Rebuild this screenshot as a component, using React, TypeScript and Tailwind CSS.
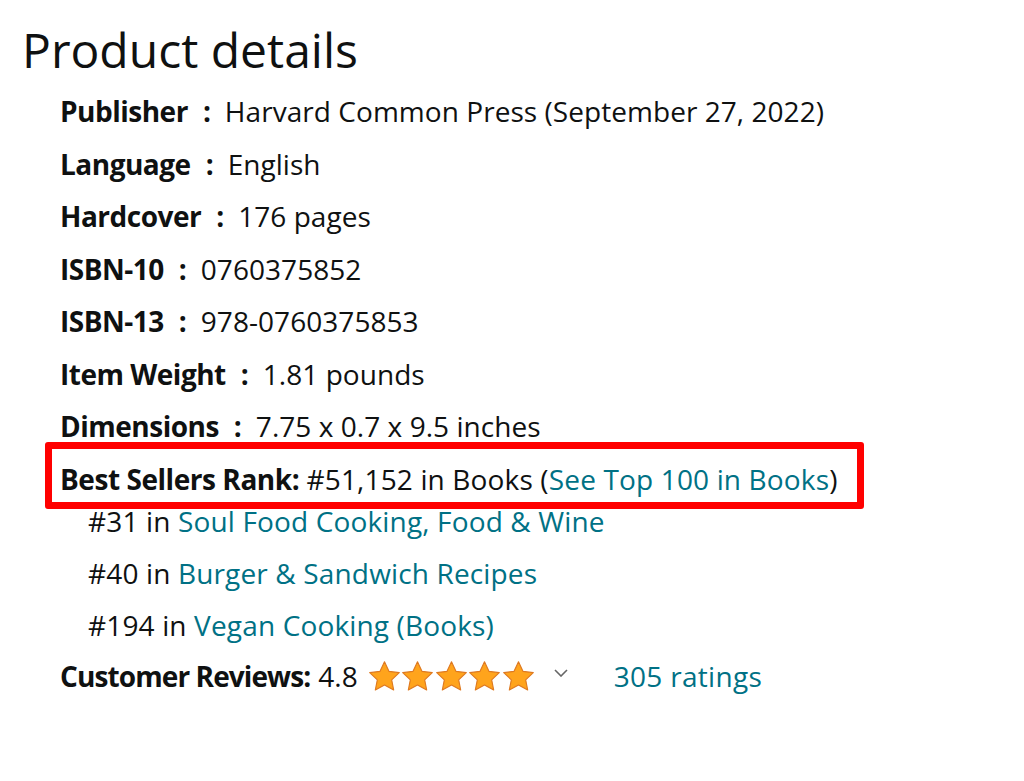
const details: [string, string][] = [
  ["Publisher", "Harvard Common Press (September 27, 2022)"],
  ["Language", "English"],
  ["Hardcover", "176 pages"],
  ["ISBN-10", "0760375852"],
  ["ISBN-13", "978-0760375853"],
  ["Item Weight", "1.81 pounds"],
  ["Dimensions", "7.75 x 0.7 x 9.5 inches"],
];

const subRanks: [string, string][] = [
  ["#31", "Soul Food Cooking, Food & Wine"],
  ["#40", "Burger & Sandwich Recipes"],
  ["#194", "Vegan Cooking (Books)"],
];

function Star() {
  return (
    <svg viewBox="1.2 1.2 21.6 21.6" className="h-[31px] w-[31px]">
      <path
        d="M12 1.8l3.1 6.6 7.2.9-5.3 5 1.4 7.1L12 17.9l-6.4 3.5L7 14.3l-5.3-5 7.2-.9z"
        fill="#ffa41c"
        stroke="#de7921"
        strokeWidth="0.8"
        strokeLinejoin="round"
      />
    </svg>
  );
}

export default function App() {
  return (
    <div className="min-h-[781px] bg-white pl-[22px] pt-[22px] text-[#0f1111]" style={{ fontFamily: "'Open Sans', 'Noto Sans', sans-serif" }}>
      <h2 className="text-[48px] leading-[56px] font-normal">Product details</h2>
      <ul className="mt-[7px] pl-[38px] text-[28px] leading-[52.5px]">
        {details.map(([label, value]) => (
          <li key={label} className="whitespace-nowrap">
            <span className="font-bold tracking-[-0.5px]">{label}</span>
            <span className="ml-[15px] mr-[14px] font-bold">:</span>
            <span className="tracking-[0.05px]">{value}</span>
          </li>
        ))}
        <li className="relative whitespace-nowrap">
          <div className="absolute left-[-15px] top-[-11px] h-[67px] w-[819px] rounded-[3px] border-[7px] border-[#ff0000]" />
          <span className="font-bold tracking-[-0.45px]">Best Sellers Rank:</span>{" "}
          <span className="tracking-[0.15px]">
            #51,152 in Books (<a href="#" className="text-[#007185]">See Top 100 in Books</a>)
          </span>
          <ul className="-mt-[10px] pl-[28px] leading-[52px]">
            {subRanks.map(([rank, cat]) => (
              <li key={cat} className="tracking-[0.15px]">
                {rank} in <a href="#" className="text-[#007185]">{cat}</a>
              </li>
            ))}
          </ul>
        </li>
        <li className="-mt-[1px] flex items-center whitespace-nowrap">
          <span className="font-bold tracking-[-0.9px]">Customer Reviews:</span>
          <span className="ml-[8px]">4.8</span>
          <span className="ml-[11px] flex gap-[2.5px]">
            {[0, 1, 2, 3, 4].map((i) => (
              <Star key={i} />
            ))}
          </span>
          <svg viewBox="0 0 14 8" className="ml-[20px] mt-[-6px] h-[8px] w-[14px]">
            <path d="M1 1l6 6 6-6" fill="none" stroke="#666" strokeWidth="1.6" />
          </svg>
          <a href="#" className="ml-[46px] text-[#007185] tracking-[0.3px]">305 ratings</a>
        </li>
      </ul>
    </div>
  );
}
